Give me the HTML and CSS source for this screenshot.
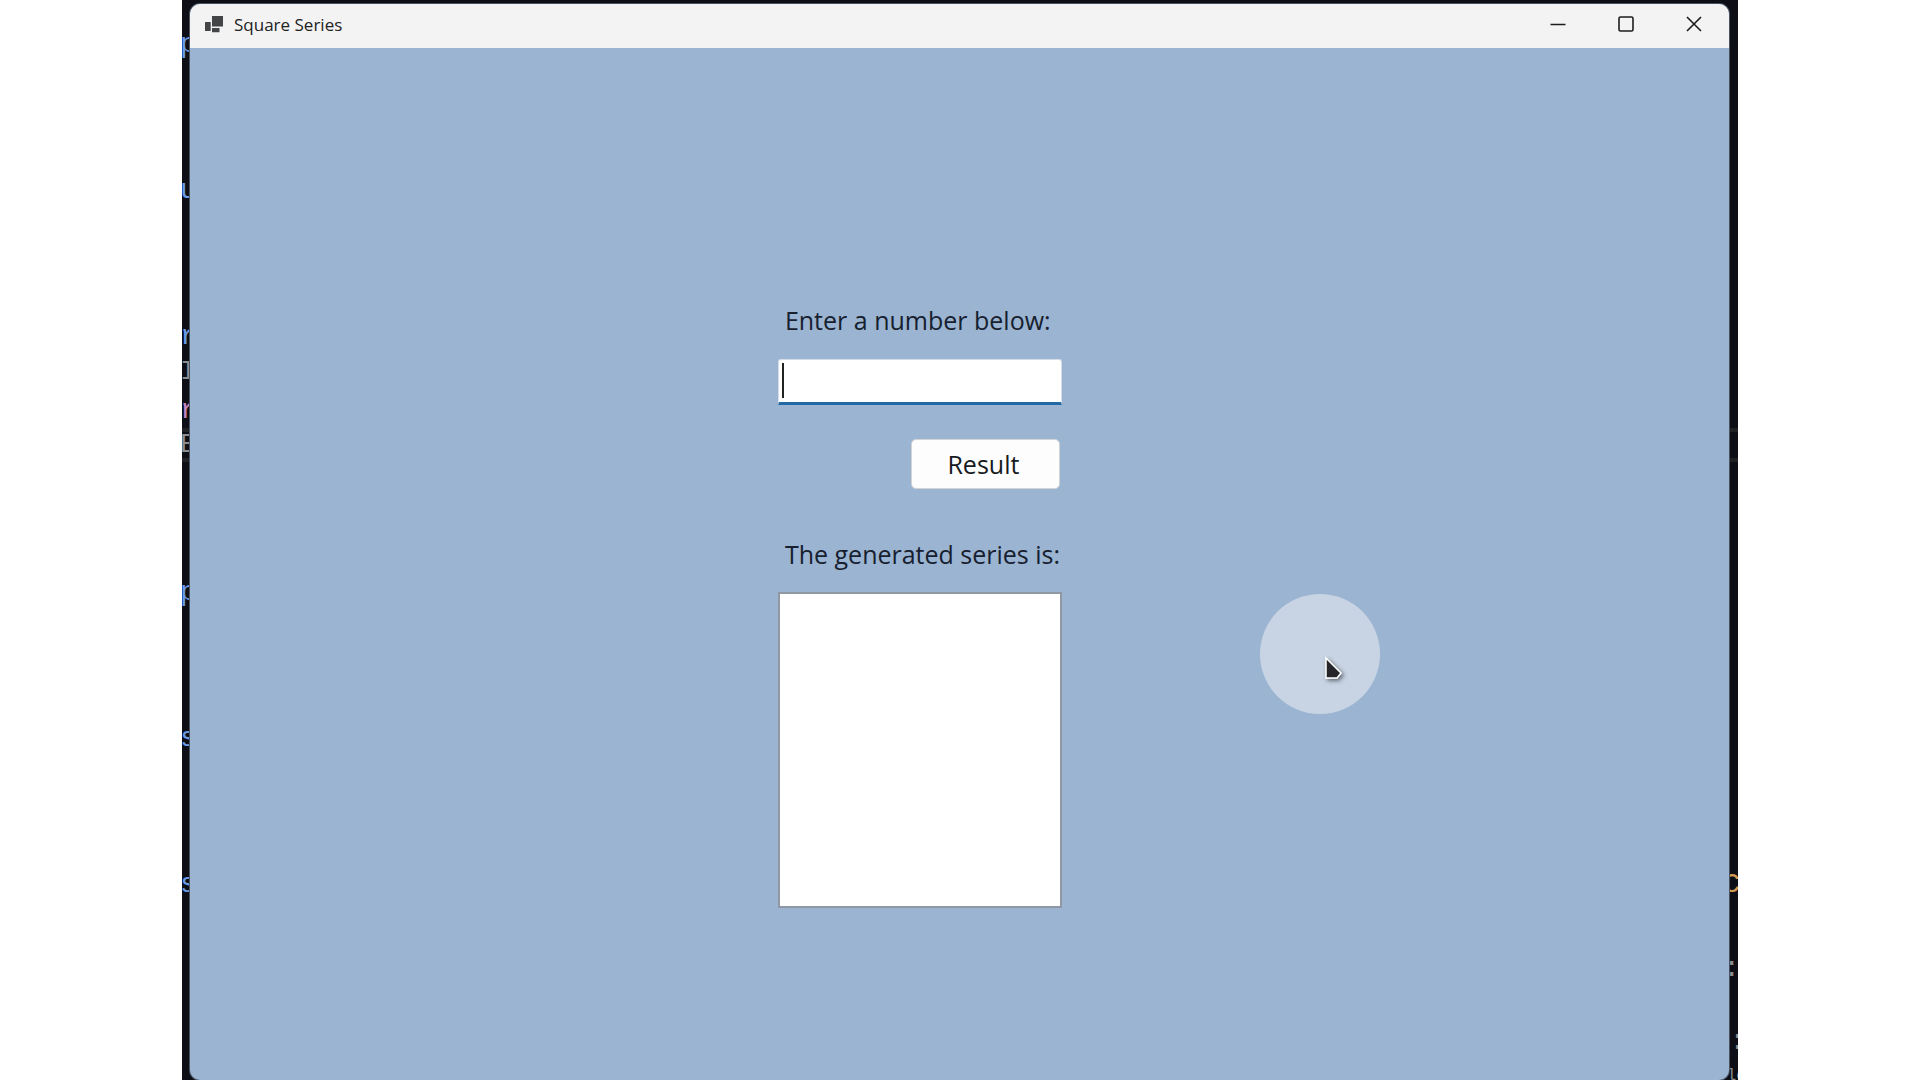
FILE: index.html
```html
<!DOCTYPE html>
<html lang="en">
<head>
<meta charset="utf-8">
<title>Square Series</title>
<link rel="stylesheet" href="styles.css">
</head>
<body>
<div class="desktop">
  <div class="editor" aria-hidden="true">
    <span class="active-line"></span>
    <span class="code left blue row-1">p</span>
    <span class="code left blue row-2">u</span>
    <span class="code left blue row-3">r</span>
    <span class="code left gray row-4">I</span>
    <span class="code left pink row-5">r</span>
    <span class="code left gray row-6">E</span>
    <span class="code left blue row-7">p</span>
    <span class="code left blue row-8">s</span>
    <span class="code left blue row-9">s</span>
    <span class="code right orange row-9">C</span>
    <span class="code right gray row-10">:</span>
    <span class="code far gray row-11">:</span>
    <span class="code status gray">lo</span>
  </div>
  <main class="window">
    <header class="titlebar">
      <svg class="app-icon" width="19" height="17" viewBox="0 0 19 17" fill="#434547">
        <path d="M7 0h11v10.500H7zM0 6h5.700v9H0zM7 12h7.500v4.300H7z"/>
      </svg>
      <h1 class="title">Square Series</h1>
      <div class="controls">
        <button class="control" type="button" aria-label="Minimize">
          <svg width="16" height="16" viewBox="0 0 16 16"><path d="M0.5 8.5h15"/></svg>
        </button>
        <button class="control" type="button" aria-label="Maximize">
          <svg width="16" height="16" viewBox="0 0 16 16"><rect x="1" y="1" width="14" height="14" rx="1.5"/></svg>
        </button>
        <button class="control" type="button" aria-label="Close">
          <svg width="16" height="16" viewBox="0 0 16 16"><path d="M1 1l14 14M15 1L1 15"/></svg>
        </button>
      </div>
    </header>
    <div class="client">
      <form class="form">
        <label class="label" for="number">Enter a number below:</label>
        <div class="field">
          <input class="input" id="number" type="text">
          <span class="caret"></span>
        </div>
        <button class="result" type="button">Result</button>
        <label class="label" for="series">The generated series is:</label>
        <select class="list" id="series" size="10"></select>
      </form>
    </div>
    <div class="pointer">
      <svg width="120" height="120" viewBox="0 0 120 120">
        <defs>
          <filter id="shadow" x="-50%" y="-50%" width="200%" height="200%">
            <feDropShadow dx="2" dy="2" stdDeviation="2" flood-color="#303840" flood-opacity="0.7"/>
          </filter>
        </defs>
        <circle cx="60" cy="60" r="60" fill="#c8d4e3"/>
        <path d="M66 64v20h11l4-5z" fill="#25272a" stroke="#fff" stroke-width="1.5" filter="url(#shadow)"/>
      </svg>
    </div>
  </main>
</div>
</body>
</html>
```
FILE: styles.css
```css
* {
  box-sizing: border-box;
}

body {
  margin: 0;
  background: #fff;
  font-family: "Open Sans", "Noto Sans", sans-serif;
  color: #17202e;
}

.desktop {
  position: relative;
  display: flex;
  width: 81.04%;
  min-height: 100vh;
  margin: 0 auto;
  padding: 4px 9px 0 8px;
  background: #0d0e16;
  overflow: hidden;
}

.editor {
  position: absolute;
  inset: 0;
  font: 28px/32px "Liberation Mono", monospace;
}

.code { position: absolute; }
.left { left: -2px; }
.right { right: -2px; }
.far { right: -8px; }
.blue { color: #6c9be6; }
.gray { color: #8b8d90; }
.pink { color: #c586c0; }
.orange { color: #d39a52; }
.row-1 { top: 29px; }
.row-2 { top: 175px; }
.row-3 { top: 321px; }
.row-4 { top: 356px; }
.row-5 { top: 395px; }
.row-6 { top: 429px; }
.row-7 { top: 577px; }
.row-8 { top: 723px; }
.row-9 { top: 869px; }
.row-10 { top: 953px; }
.row-11 { top: 1026px; }

.status {
  top: 1066px;
  right: -8px;
  font-size: 16px;
  line-height: 20px;
}

.active-line {
  position: absolute;
  top: 428px;
  left: 0;
  right: 0;
  height: 34px;
  border: solid #202124;
  border-width: 4px 0;
}

.window {
  position: relative;
  display: flex;
  flex-direction: column;
  flex: 1;
  border-radius: 10px;
  background: #9ab4d2;
  box-shadow: 0 0 0 1px #4a5260;
  overflow: hidden;
}

.titlebar {
  display: flex;
  align-items: center;
  height: 44px;
  padding-left: 15px;
  background: #f3f3f3;
}

.app-icon { margin-bottom: 4px; }

.title {
  margin: 0 0 2px 10px;
  font-size: 17px;
  line-height: 24px;
  font-weight: 400;
  color: #222;
}

.controls {
  display: flex;
  height: 100%;
  margin-left: auto;
  padding-right: 1px;
}

.control {
  display: grid;
  place-items: center;
  width: 68px;
  padding: 0 0 4px;
  border: 0;
  background: none;
}

.control svg {
  fill: none;
  stroke: #1c1c1c;
  stroke-width: 1.6;
}

.client {
  flex: 1;
  padding: 252px 0 172px 38.2%;
}

.form {
  display: flex;
  flex-direction: column;
  width: 284px;
}

.label {
  padding-left: 7px;
  font-size: 25px;
  line-height: 40px;
  white-space: nowrap;
}

.field {
  position: relative;
  margin-top: 19px;
}

.input {
  display: block;
  width: 100%;
  height: 46px;
  padding: 0 4px;
  border: 1px solid #d5dce5;
  border-bottom: 3px solid #2369a5;
  border-radius: 3px 3px 0 0;
  outline: 0;
  background: #fff;
  font: inherit;
  font-size: 25px;
}

.caret {
  position: absolute;
  top: 4px;
  left: 4px;
  width: 2px;
  height: 35px;
  background: #222;
}

.result {
  align-self: flex-end;
  width: 149px;
  height: 50px;
  margin: 34px 2px 45px 0;
  padding: 0 4px 0 0;
  border: 1px solid #d0d3d8;
  border-radius: 5px;
  background: #fdfdfd;
  font: inherit;
  font-size: 25px;
  color: #171a20;
}

.list {
  width: 100%;
  height: 316px;
  margin-top: 18px;
  border: 2px solid #8f98a3;
  border-radius: 0;
  background: #fff;
}

.pointer {
  position: absolute;
  top: 590px;
  left: 69.5%;
}

.pointer svg { display: block; }
```
